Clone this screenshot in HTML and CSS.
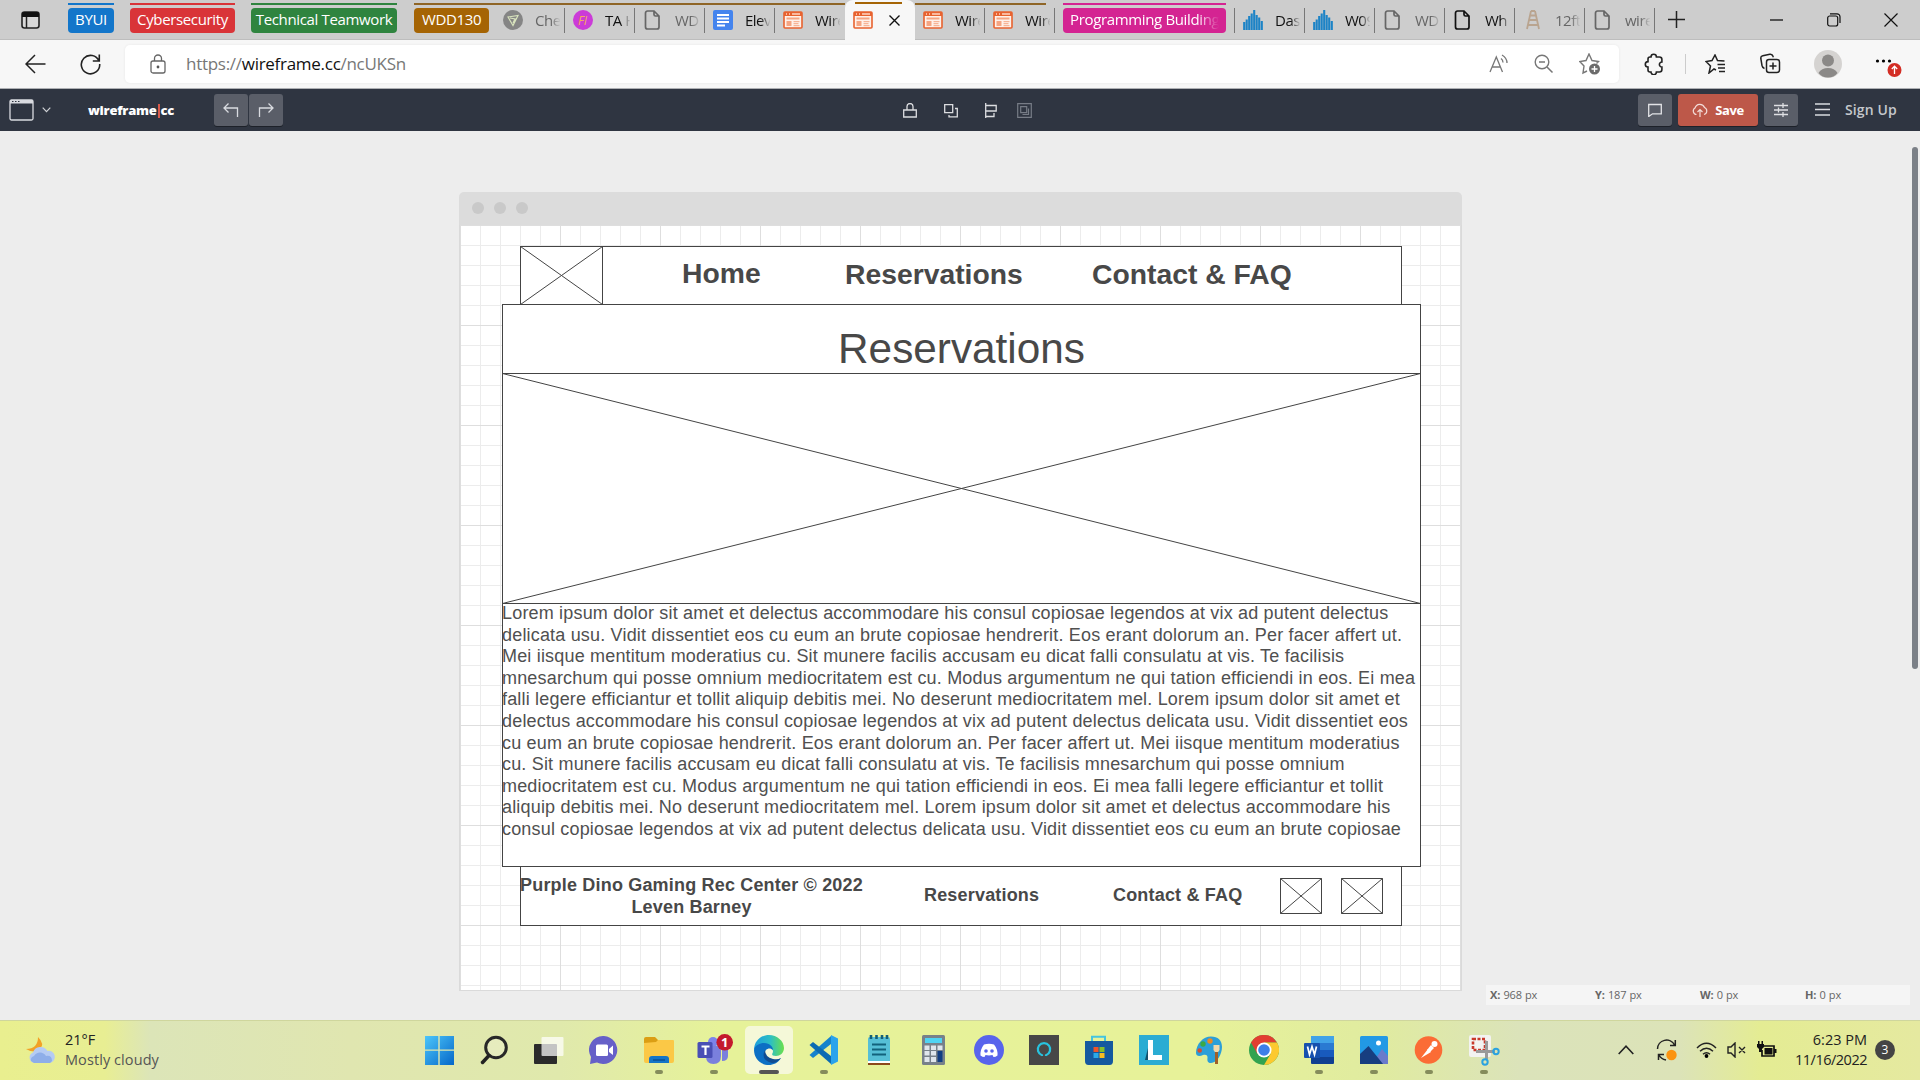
FILE: index.html
```html
<!DOCTYPE html>
<html lang="en">
<head>
<meta charset="utf-8">
<title>wireframe.cc</title>
<link rel="stylesheet" href="styles.css">
</head>
<body>
<svg class="defs" width="0" height="0">
  <symbol id="page" viewBox="0 0 20 20"><path d="M4.500 1h6.500l5 5v11a2 2 0 0 1-2 2H4.500a2 2 0 0 1-2-2V3a2 2 0 0 1 2-2zM11 1v3.500a1.500 1.500 0 0 0 1.500 1.500H16" fill="none" stroke="currentColor" stroke-width="1.700"/></symbol>
  <symbol id="wire" viewBox="0 0 20 20"><rect x="1" y="2" width="18" height="16" rx="1" fill="#fff1ea" stroke="#e8622f" stroke-width="1.600"/><path d="M1 2h18v4H1z" fill="#e8622f"/><path d="M3 4h1M6 4h1M9 4h8" stroke="#ffd5c3" stroke-width="1.300"/><path d="M3.500 8.500h13" stroke="#f5a583" stroke-width="2"/><path d="M3.500 11h5v5h-5z" fill="#f5a583"/><path d="M10.500 11.700h6M10.500 13.700h5M10.500 15.700h6" stroke="#f5a583"/></symbol>
  <symbol id="bars" viewBox="0 0 20 20"><path d="M1.200 20v-8M3.700 20V9.500M6.200 20V6M8.700 20V3.500M11.200 20V0M13.700 20V5M16.200 20V7.500M18.800 20v-9" stroke="#1c83c6" stroke-width="2.100"/></symbol>
</svg>

<header class="tabstrip">
  <svg class="tabmenu" width="20" height="20" viewBox="0 0 20 20"><rect x="1" y="2" width="17" height="16" rx="2.500" fill="#d8d8d8" stroke="#222" stroke-width="1.600"/><path d="M1 3.500Q1 2 3 2h13q2 0 2 2v3H1z" fill="#111"/><path d="M5.500 7v11" stroke="#222" stroke-width="1.500"/></svg>
  <span class="pill blue">BYUI</span>
  <span class="pill red">Cybersecurity</span>
  <span class="pill green">Technical Teamwork</span>
  <span class="pill brown">WDD130</span>
  <div class="tabs grouped">
    <div class="tab dim"><svg width="20" height="20"><circle cx="10" cy="10" r="10" fill="#858585"/><path d="M5 7l10-1.500-5 10zM7 8l5 1-2 4" fill="none" stroke="#d8e3bd" stroke-width="1.200"/></svg><span>Che</span></div>
    <div class="tab"><svg width="20" height="20"><circle cx="10" cy="10" r="10" fill="#cb3bd8"/><text x="5" y="14.500" class="fi">FI</text></svg><span>TA H</span></div>
    <div class="tab dim"><svg width="20" height="20"><use href="#page"/></svg><span>WD</span></div>
    <div class="tab"><svg width="20" height="20"><rect width="20" height="20" rx="2" fill="#4484ee"/><path d="M4 5h12M4 8.500h12M4 12h12M4 15.500h8" stroke="#fff" stroke-width="1.900"/></svg><span>Elev</span></div>
    <div class="tab"><svg width="20" height="20"><use href="#wire"/></svg><span>Wire</span></div>
    <div class="tab active"><svg width="20" height="20"><use href="#wire"/></svg><svg class="x" width="11" height="11" viewBox="0 0 11 11"><path d="M.5.5l10 10M10.500.5l-10 10" stroke="#111" stroke-width="1.400"/></svg></div>
    <div class="tab"><svg width="20" height="20"><use href="#wire"/></svg><span>Wire</span></div>
    <div class="tab"><svg width="20" height="20"><use href="#wire"/></svg><span>Wire</span></div>
  </div>
  <span class="pill pink"><span>Programming Building</span></span>
  <div class="tabs rest">
    <div class="tab"><svg width="20" height="20"><use href="#bars"/></svg><span>Das</span></div>
    <div class="tab"><svg width="20" height="20"><use href="#bars"/></svg><span>W09</span></div>
    <div class="tab dim"><svg width="20" height="20"><use href="#page"/></svg><span>WD</span></div>
    <div class="tab"><svg width="20" height="20"><use href="#page"/></svg><span>Wh</span></div>
    <div class="tab dim"><svg width="20" height="20" viewBox="0 0 20 20"><path d="M8 1L4 19M12 1l4 18M8 1h4M7 5.500h6M6.500 10h7.500M5 15h10" fill="none" stroke="#b9a48f" stroke-width="1.800"/></svg><span>12ft</span></div>
    <div class="tab dim"><svg width="20" height="20"><use href="#page"/></svg><span>wire</span></div>
  </div>
  <svg class="newtab" width="17" height="17"><path d="M8.500 0v17M0 8.500h17" stroke="#222" stroke-width="1.500"/></svg>
  <div class="winctl">
    <svg width="14" height="14"><path d="M0 7h13" stroke="#111" stroke-width="1.300"/></svg>
    <svg width="14" height="14"><rect x=".7" y="3" width="10" height="10" rx="2" fill="none" stroke="#111" stroke-width="1.200"/><path d="M3 .8h7a3 3 0 0 1 3 3V10" fill="none" stroke="#111" stroke-width="1.200"/></svg>
    <svg width="14" height="14"><path d="M.5.5l13 13M13.500.5l-13 13" stroke="#111" stroke-width="1.200"/></svg>
  </div>
</header>

<div class="toolbar">
  <svg class="back" width="21" height="20" viewBox="0 0 21 20"><path d="M20.500 10H1M10 1L1 10l9 9" fill="none" stroke="#222" stroke-width="1.500"/></svg>
  <svg class="reload" width="21" height="22" viewBox="0 0 21 22"><path d="M19 8A9.200 9.200 0 1 0 19.700 11M19.300 1.500V8h-6.500" fill="none" stroke="#222" stroke-width="1.600"/></svg>
  <div class="urlbar">
    <svg width="16" height="20" viewBox="0 0 16 20"><rect x="1" y="7" width="14" height="12" rx="2" fill="none" stroke="#666" stroke-width="1.300"/><path d="M4.500 7V4.500a3.500 3.500 0 0 1 7 0V7" fill="none" stroke="#666" stroke-width="1.300"/><circle cx="8" cy="13" r="1.400" fill="#555"/></svg>
    <span class="url">https://<b>wireframe.cc</b>/ncUKSn</span>
    <div class="urlicons">
      <svg width="20" height="20" viewBox="0 0 20 20"><path d="M1 18L7.300 3 13.500 18M3.300 13h8M12 4.500q2 1.500 2 4M13 1q5 3 5 8" fill="none" stroke="#777" stroke-width="1.300"/></svg>
      <svg width="20" height="20" viewBox="0 0 20 20"><circle cx="8" cy="8" r="6.800" fill="none" stroke="#777" stroke-width="1.400"/><path d="M13 13l5.500 5.500M5 8h6" stroke="#777" stroke-width="1.500"/></svg>
      <svg width="22" height="22" viewBox="0 0 22 22"><path d="M8 18l-4 2 1-7L.8 8.500l6.200-1L10 1l3 6.500 6.500 1-2 2" fill="none" stroke="#777" stroke-width="1.400"/><circle cx="15.500" cy="16" r="5.500" fill="#6b6b6b"/><path d="M15.500 13v6M12.500 16h6" stroke="#fff" stroke-width="1.300"/></svg>
    </div>
  </div>
  <svg class="puzzle" width="21" height="22" viewBox="0 0 21 22"><path d="M7 4a2.700 2.700 0 0 1 5.400 0h3a2.500 2.500 0 0 1 2.500 2.500V9a2.500 2.500 0 1 0 0 5v2.500a2.500 2.500 0 0 1-2.500 2.500h-3a2.700 2.700 0 0 1-5.400 0H6a2 2 0 0 1-2-2v-3a2.700 2.700 0 0 1 0-5.400V6a2 2 0 0 1 2-2z" fill="none" stroke="#222" stroke-width="1.600"/></svg>
  <i class="vr"></i>
  <svg class="fav" width="21" height="20" viewBox="0 0 21 20"><path d="M11 16l-2-1-5 4 1.500-7L1 7.500l6-1L10 1l2.500 5.500 7 .5M12.500 10.500H20M13 14h7M14 17.500h6" fill="none" stroke="#222" stroke-width="1.500"/></svg>
  <svg class="coll" width="21" height="21" viewBox="0 0 21 21"><rect x="6.500" y="6.500" width="13" height="13" rx="2.500" fill="none" stroke="#222" stroke-width="1.500"/><path d="M13 9.500v7M9.500 13h7M4.500 15.500q-2-.5-2.500-3L.8 5.500q-.3-2.300 2-2.800l7-1.500q2.500-.4 3.200 2l.4 1" fill="none" stroke="#222" stroke-width="1.500"/></svg>
  <svg class="avatar" width="28" height="28"><circle cx="14" cy="14" r="14" fill="#d5d3d1"/><circle cx="14" cy="10.500" r="6" fill="#8b8987"/><path d="M4.500 23q3-5 9.500-5t9.500 5Q20 27.500 14 27.500T4.500 23z" fill="#8b8987"/></svg>
  <svg class="more" width="27" height="22" viewBox="0 0 27 22"><circle cx="2.500" cy="3" r="1.600"/><circle cx="8.500" cy="3" r="1.600"/><circle cx="14.500" cy="3" r="1.600"/><circle cx="19.500" cy="12" r="7" fill="#d32d24"/><path d="M19.500 16V8.500M16.800 11l2.700-2.800 2.700 2.800" fill="none" stroke="#fff" stroke-width="1.300"/></svg>
</div>

<nav class="appbar">
  <svg class="appwin" width="26" height="22"><rect x="1" y="1" width="23" height="20" rx="1.500" fill="none" stroke="#d9dbe0" stroke-width="1.300"/><path d="M1 1h23v3.500H1z" fill="#d9dbe0"/><path d="M3 2.500h1.500M6 2.500h1.500M9 2.500h1.500" stroke="#2f3541" stroke-width="1.200"/></svg>
  <svg class="chev" width="9" height="6"><path d="M.7.7l3.800 4 3.800-4" fill="none" stroke="#d0d2d6" stroke-width="1.200"/></svg>
  <span class="brand">wireframe<i></i>cc</span>
  <div class="undo">
    <span><svg width="16" height="14" viewBox="0 0 16 14"><path d="M14.500 14V5H1M5.500.5L1 5l4.500 4.500" fill="none" stroke="#d9dbe0" stroke-width="1.300"/></svg></span>
    <span><svg width="16" height="14" viewBox="0 0 16 14"><path d="M1.500 14V5H15M10.500.5L15 5l-4.500 4.500" fill="none" stroke="#d9dbe0" stroke-width="1.300"/></svg></span>
  </div>
  <div class="tools">
    <svg width="14" height="15"><path d="M.7 7h12.600v7H.7zM4 7V3.500a3 3 0 0 1 6 0V7" fill="none" stroke="#dcdde0" stroke-width="1.300"/></svg>
    <svg width="14" height="15"><path d="M.7 1.700h8v8h-8zM11 5.500h2.300v8.300H5V12" fill="none" stroke="#dcdde0" stroke-width="1.300"/></svg>
    <svg width="12" height="15"><path d="M.7 0v15M.7 2.500h10.500v5.500H.7M9 10v3.500H.7" fill="none" stroke="#dcdde0" stroke-width="1.300"/></svg>
    <svg width="15" height="15"><path d="M.7.7h13.600v13.600H.7zM3.700 3.700h6v6h-6zM11.500 5.500v6h-6" fill="none" stroke="#777c86" stroke-width="1.200"/></svg>
  </div>
  <span class="btn"><svg width="14" height="14"><path d="M.7 1.500h12.600v9.300H4.500L.7 13.500z" fill="none" stroke="#e2e3e6" stroke-width="1.300"/></svg></span>
  <span class="btn save"><svg width="16" height="14" viewBox="0 0 16 14"><path d="M4.500 11.500A3.500 3.500 0 0 1 3 5a5 5 0 0 1 9.500-.5A3.700 3.700 0 0 1 12 11.500M8 14V6.500M5.500 9L8 6.500 10.500 9" fill="none" stroke="#f3dcd8" stroke-width="1.200"/></svg>Save</span>
  <span class="btn"><svg width="14" height="16" viewBox="0 0 14 16"><path d="M0 3.500h14M0 8h14M0 12.500h14M9 1v5M4.500 5.500v5M9 10v5" stroke="#dfe0e3" stroke-width="1.300"/></svg></span>
  <svg class="burger" width="15" height="13"><path d="M0 1h15M0 6.500h15M0 12h15" stroke="#d9dbe0" stroke-width="1.400"/></svg>
  <span class="signup">Sign Up</span>
</nav>

<main class="workspace">
  <section class="mock">
    <div class="mockbar"><i></i><i></i><i></i></div>
    <div class="grid">
      <div class="wf-nav">
        <svg class="pic logo" viewBox="0 0 83 59" preserveAspectRatio="none"><path d="M.5.5h82v58H.5zL82.500 58.500M82.500.5L.5 58.500"/></svg>
        <b class="n1">Home</b><b class="n2">Reservations</b><b class="n3">Contact &amp; FAQ</b>
      </div>
      <div class="wf-main">
        <h1>Reservations</h1>
        <svg class="pic hero" viewBox="0 0 919 231"><path d="M.5.5h918v230H.5zL918.500 230.500M918.500.5L.5 230.500"/></svg>
        <p>Lorem ipsum dolor sit amet et delectus accommodare his consul copiosae legendos at vix ad putent delectus<br>delicata usu. Vidit dissentiet eos cu eum an brute copiosae hendrerit. Eos erant dolorum an. Per facer affert ut.<br>Mei iisque mentitum moderatius cu. Sit munere facilis accusam eu dicat falli consulatu at vis. Te facilisis<br>mnesarchum qui posse omnium mediocritatem est cu. Modus argumentum ne qui tation efficiendi in eos. Ei mea<br>falli legere efficiantur et tollit aliquip debitis mei. No deserunt mediocritatem mel. Lorem ipsum dolor sit amet et<br>delectus accommodare his consul copiosae legendos at vix ad putent delectus delicata usu. Vidit dissentiet eos<br>cu eum an brute copiosae hendrerit. Eos erant dolorum an. Per facer affert ut. Mei iisque mentitum moderatius<br>cu. Sit munere facilis accusam eu dicat falli consulatu at vis. Te facilisis mnesarchum qui posse omnium<br>mediocritatem est cu. Modus argumentum ne qui tation efficiendi in eos. Ei mea falli legere efficiantur et tollit<br>aliquip debitis mei. No deserunt mediocritatem mel. Lorem ipsum dolor sit amet et delectus accommodare his<br>consul copiosae legendos at vix ad putent delectus delicata usu. Vidit dissentiet eos cu eum an brute copiosae</p>
      </div>
      <div class="wf-foot">
        <b class="f1">Purple Dino Gaming Rec Center © 2022<br>Leven Barney</b>
        <b class="f2">Reservations</b><b class="f3">Contact &amp; FAQ</b>
        <svg class="pic social" viewBox="0 0 42 36"><path d="M.5.5h41v35H.5zL41.500 35.500M41.500.5L.5 35.500"/></svg>
        <svg class="pic social" viewBox="0 0 42 36"><path d="M.5.5h41v35H.5zL41.500 35.500M41.500.5L.5 35.500"/></svg>
      </div>
    </div>
  </section>
  <i class="scroll"></i>
  <div class="coords"><span><b>X:</b> 968 px</span><span><b>Y:</b> 187 px</span><span><b>W:</b> 0 px</span><span><b>H:</b> 0 px</span></div>
</main>

<footer class="taskbar">
  <div class="weather">
    <svg width="30" height="28" viewBox="0 0 30 28"><path d="M12 1q7 7 2 12T0 13q12 0 12-12z" fill="#f2a127"/><path d="M8 27a5.500 5.500 0 0 1-1-10.500 8 8 0 0 1 14.500-1.500A6 6 0 0 1 24 27z" fill="#b5cbf3"/><path d="M5 25a4 4 0 0 1 3-5 7 7 0 0 1 12 0q6-1 6 5l-2 2H8z" fill="#8eaee9"/></svg>
    <div>21°F<br><span>Mostly cloudy</span></div>
  </div>
  <div class="apps">
    <span><svg width="30" height="30" viewBox="0 0 30 30"><defs><linearGradient id="win" x2="1" y2="1"><stop stop-color="#4cc6fa"/><stop offset="1" stop-color="#0567c9"/></linearGradient></defs><path d="M1 1h13.300v13.500H1zM15.700 1H30v13.500H15.700zM1 15.800h13.300V30H1zM15.700 15.800H30V30H15.700z" fill="url(#win)"/></svg></span>
    <span><svg width="30" height="30" viewBox="0 0 30 30"><circle cx="17" cy="12.500" r="10.300" fill="#ffffff33" stroke="#282828" stroke-width="3"/><path d="M10 20.500L3.500 27.500" stroke="#222" stroke-width="3.500" stroke-linecap="round"/></svg></span>
    <span><svg width="30" height="30" viewBox="0 0 30 30"><rect x="0" y="9" width="23" height="20" rx="1" fill="#2b2b2b"/><rect x="7.500" y="2" width="22" height="19" rx="1" fill="#fff" fill-opacity=".72"/></svg></span>
    <span><svg width="30" height="30" viewBox="0 0 30 30"><path d="M15 1a14 14 0 1 1-7 26.500L1 29l1-7A14 14 0 0 1 15 1z" fill="#6660c8"/><rect x="7" y="9.500" width="12" height="11.500" rx="1.500" fill="#fff"/><path d="M20 14l4-3.500v9.500L20 17z" fill="#fff"/></svg></span>
    <span class="run"><svg width="30" height="30" viewBox="0 0 30 30"><path d="M0 4q0-2 2-2h9l3 3v6H0z" fill="#db9e14"/><path d="M0 8l12-1 2-2h15q1 0 1 1v20q0 2-2 2H2q-2 0-2-2z" fill="#fbc846"/><path d="M5 28v-4q0-3 3-3h14q3 0 3 3v4z" fill="#1575c7"/><path d="M9 25h12" stroke="#0b4f94" stroke-width="1.500"/></svg></span>
    <span class="run"><svg width="38" height="32" viewBox="0 0 38 32"><circle cx="18" cy="8" r="5" fill="#7b83eb"/><circle cx="27" cy="10" r="4" fill="#5059c9"/><path d="M11 12h15v10q0 8-7.500 8T11 22zM27 13h6v9q0 5-6 5z" fill="#7a80dd"/><rect x="2.500" y="8" width="15" height="16" rx="1.500" fill="#494fb5"/><path d="M6.500 12.500h8M10.500 12.500V21" stroke="#fff" stroke-width="2.200"/><circle cx="29.700" cy="8.300" r="8.300" fill="#c4192d"/><text x="26" y="13" class="one">1</text></svg></span>
    <span class="run on"><svg width="32" height="32" viewBox="0 0 32 32"><defs><linearGradient id="eg" x2="1"><stop stop-color="#1c9ede"/><stop offset=".55" stop-color="#2dbfc3"/><stop offset="1" stop-color="#6be04a"/></linearGradient></defs><path d="M1 16C1 7 8 1 16 1s15 6 15 13c0 5-4 8-8 8-5 0-4-2-3-4 0-5-4-6-7-6-6 0-11 3-12 4z" fill="url(#eg)"/><path d="M1 16c1-5 6-7 10-7 6 0 9 4 9 7-4-4-10 0-8 6 2 5 9 7 16 2-3 5-8 7-12 7C7 31 1 24 1 16z" fill="#0c6fc4"/><path d="M12 16q-5 10 7 13 5 0 9-5-3 2-8 1-8-2-8-9z" fill="#104c92"/></svg></span>
    <span class="run"><svg width="30" height="30" viewBox="0 0 30 30"><path d="M22 1v8L4 23l-3.500-3z" fill="#1583cc"/><path d="M22 29v-8L4 7 .5 10z" fill="#0b6bb3"/><path d="M22 0l7 3.500v23L22 30z" fill="#2aa3ec"/></svg></span>
    <span><svg width="22" height="30" viewBox="0 0 22 30"><rect y="2" width="22" height="27" rx="2" fill="#56bfd6"/><path d="M0 26h22v2H0z" fill="#fff"/><path d="M0 29h22" stroke="#8c4a1a" stroke-width="2"/><path d="M3 0v4M8.500 0v4M14 0v4M19 0v4" stroke="#125f78" stroke-width="2.600"/><path d="M4 9.500h14M4 14.500h14M4 19.500h14" stroke="#12627c" stroke-width="2"/></svg></span>
    <span><svg width="23" height="30" viewBox="0 0 23 30"><rect width="23" height="30" rx="1.500" fill="#77818a"/><rect x="3" y="3" width="17" height="5" fill="#4fd4f3"/><path d="M2.500 10.500h5v4.500h-5zM9 10.500h5v4.500H9zM15.500 10.500h5v4.500h-5zM2.500 16h5v4.500h-5zM9 16h5v4.500H9zM2.500 22h5v5h-5zM9 22h5v5H9z" fill="#dfe6ec"/><path d="M15.500 16h5v11h-5z" fill="#123e82"/></svg></span>
    <span><svg width="30" height="30" viewBox="0 0 30 30"><circle cx="15" cy="15" r="15" fill="#5864ec"/><path d="M10 9.500q5-1.500 10 0 4 5 3.500 11-2 1.500-4 1.500l-1-2q-3.500.8-7 0l-1 2q-2 0-4-1.500Q6 14.500 10 9.500z" fill="#fff"/><circle cx="12" cy="16" r="1.800" fill="#5864ec"/><circle cx="18" cy="16" r="1.800" fill="#5864ec"/></svg></span>
    <span><svg width="30" height="30" viewBox="0 0 30 30"><path d="M0 0h30v30H0z" fill="#474747"/><path d="M13 21v-.8a6.200 6.200 0 1 1 4 0v.8" fill="none" stroke="#28c3df" stroke-width="2.200"/></svg></span>
    <span><svg width="30" height="30" viewBox="0 0 30 30"><path d="M8 7V1.800h13V7" fill="none" stroke="#45c5df" stroke-width="2"/><path d="M1 6h28v20q0 4-3.500 4h-21Q1 30 1 26z" fill="#15599f"/><path d="M9.500 12h5v5h-5z" fill="#ee5428"/><path d="M15.500 12h5v5h-5z" fill="#85bf2c"/><path d="M9.500 18h5v5h-5z" fill="#2ba9e8"/><path d="M15.500 18h5v5h-5z" fill="#f9bd22"/></svg></span>
    <span><svg width="30" height="30" viewBox="0 0 30 30"><path d="M0 0h30v30H0z" fill="#2bacd3"/><path d="M11 5L6 25h9z" fill="#14506b"/><path d="M9 5h5v15h9v5H9z" fill="#fff"/></svg></span>
    <span><svg width="30" height="30" viewBox="0 0 30 30"><path d="M17 1.500c7 0 11 4 11 10.500 0 7-5 16-11 16-3 0-4-2-3.500-5 .5-3-2-4-4.500-3-3 1.500-7 1.500-7-2C2 9 9 1.500 17 1.500z" fill="#2c9fd8"/><circle cx="9" cy="9" r="2.700" fill="#3aa946"/><circle cx="16" cy="6" r="2.700" fill="#ed8a23"/><circle cx="5.700" cy="15.500" r="2.300" fill="#d64d30"/><path d="M19.500 10h6v5l-2 3h-2l-2-3z" fill="#f3d8a8"/><path d="M22.500 17v12" stroke="#a15f28" stroke-width="3"/></svg></span>
    <span><svg width="30" height="30" viewBox="0 0 30 30"><circle cx="15" cy="15" r="15" fill="#32a350"/><path d="M2 7.500A15 15 0 0 1 28 7.500H15L8.500 19z" fill="#e23e31"/><path d="M15 7.500h13A15 15 0 0 1 15 30l6.500-11z" fill="#fcc92f"/><circle cx="15" cy="15" r="7.500" fill="#fff"/><circle cx="15" cy="15" r="5.800" fill="#3d7fe8"/></svg></span>
    <span class="run"><svg width="30" height="30" viewBox="0 0 30 30"><path d="M7 1h23v7H7z" fill="#41a3e8"/><path d="M7 8h23v7H7z" fill="#2a7ad2"/><path d="M7 15h23v7H7z" fill="#185abd"/><path d="M7 22h23v6q0 1-1 1H8q-1 0-1-1z" fill="#103f91"/><rect y="8" width="16" height="15" rx="1" fill="#1750ae"/><path d="M3.500 11.500l2 8 2.500-8 2.500 8 2-8" fill="none" stroke="#fff" stroke-width="1.700"/></svg></span>
    <span class="run"><svg width="30" height="30" viewBox="0 0 30 30"><rect x="1" y="1" width="28" height="28" rx="1.500" fill="#2299e5"/><path d="M13 29l10-15 6 7v8z" fill="#6a7acb"/><path d="M1 19L9.500 11 24 29H1z" fill="#173e80"/><circle cx="19.500" cy="8" r="2.500" fill="#fff"/></svg></span>
    <span class="run"><svg width="30" height="30" viewBox="0 0 30 30"><circle cx="14.500" cy="15" r="13.800" fill="#fb6c35"/><path d="M7 23l7-9 3 3z" fill="#fff"/><path d="M13 15l4-5 3 3-4 4z" fill="#fff"/><circle cx="20.500" cy="9" r="3" fill="#fff"/></svg></span>
    <span class="run"><svg width="32" height="32" viewBox="0 0 32 32"><rect x="1" y="1" width="22" height="22" rx="2" fill="#f3f3f1"/><rect x="5" y="5" width="12" height="11" fill="none" stroke="#c9392b" stroke-width="2.600" stroke-dasharray="3 1.500"/><path d="M18.500 7v18M8 17.500h19" stroke="#9a9a9a" stroke-width="3"/><circle cx="28" cy="17.500" r="2.700" fill="none" stroke="#2aa2e0" stroke-width="2"/><circle cx="17" cy="28" r="2.700" fill="none" stroke="#2aa2e0" stroke-width="2"/></svg></span>
  </div>
  <div class="tray">
    <svg class="up" width="16" height="10"><path d="M.7 9L8 1.200 15.300 9" fill="none" stroke="#222" stroke-width="1.600"/></svg>
    <svg class="sync" width="22" height="22" viewBox="0 0 22 22"><path d="M1.500 10A9 9 0 0 1 18.500 6M19.300 1v5.500H14M2.500 21v-5.500H8M3 16q2 4 7 5" fill="none" stroke="#222" stroke-width="1.500"/><circle cx="15.500" cy="16" r="5.200" fill="#fb9311"/></svg>
    <svg class="wifi" width="21" height="16" viewBox="0 0 21 16"><path d="M1 6Q10.500-3.500 20 6M4 9.200q6.500-6 13 0M7 12.200q3.500-3 7 0" fill="none" stroke="#222" stroke-width="1.500"/><circle cx="10.500" cy="14" r="1.900"/></svg>
    <svg class="vol" width="20" height="16" viewBox="0 0 20 16"><path d="M1 5h3l4-4v14l-4-4H1zM12 5l6 6M18 5l-6 6" fill="none" stroke="#222" stroke-width="1.400"/></svg>
    <svg class="bat" width="20" height="18" viewBox="0 0 20 18"><path d="M7 5h10v10H5V9" fill="none" stroke="#111" stroke-width="1.700"/><path d="M7.500 7h8v6.500h-8zM17 8h2.500v4H17zM0 3h7v3L5 8v3H2V8L0 6zM1 0h1.500v3H1zM4.500 0H6v3H4.500z" fill="#111"/></svg>
    <div class="clock"><span>6:23 PM</span><br>11/16/2022</div>
    <span class="count">3</span>
  </div>
</footer>
</body>
</html>
```
FILE: styles.css
```css
* { box-sizing: border-box; }
body { margin: 0; width: 1920px; height: 1080px; overflow: hidden; display: flex; flex-direction: column; background: #ededed; font-family: "Open Sans", "Noto Sans", sans-serif; font-size: 15px; }
svg { flex: none; display: block; }
.defs { position: absolute; }

.tabstrip { height: 40px; display: flex; background: #cdcdcd; flex: none; border-bottom: 1px solid #bdbdbd; }
.tabmenu { margin: 10px 26px 0 21px; }
.pill { position: relative; height: 25px; margin-top: 8px; border-radius: 4px; color: #fff; line-height: 23px; text-align: center; letter-spacing: -.35px; white-space: nowrap; flex: none; }
.pill::before { content: ""; position: absolute; left: 0; right: 0; top: -5px; height: 2px; background: inherit; }
.blue { width: 46px; background: #1376ca; margin-left: 1px; }
.red { width: 105px; background: #d93438; margin-left: 16px; }
.green { width: 146px; background: #2f843f; margin-left: 16px; }
.brown { width: 75px; background: #a56404; margin-left: 17px; }
.pink { width: 163px; background: #d42492; margin-left: 8px; text-align: left; padding-left: 7px; }
.pink span { display: block; width: 149px; overflow: hidden; -webkit-mask: linear-gradient(90deg, #000 85%, transparent); mask: linear-gradient(90deg, #000 85%, transparent); }
.tabs { display: flex; margin-left: 6px; flex: none; }
.tab { position: relative; width: 70px; padding: 0 2px 0 8px; height: 40px; display: flex; align-items: center; gap: 12px; color: #111; }
.tab::after { content: ""; position: absolute; right: 0; top: 8px; width: 1px; height: 25px; background: #777; }
.tab span { width: 26px; overflow: hidden; white-space: nowrap; line-height: 24px; letter-spacing: -.5px; -webkit-mask: linear-gradient(90deg, #000 60%, transparent 98%); mask: linear-gradient(90deg, #000 60%, transparent 98%); }
.tab.dim { color: #666; }
.grouped .tab::before { content: ""; position: absolute; left: 0; right: 0; top: 3px; height: 2px; background: #8f6526; }
.grouped .tab:first-child::before { left: -81px; }
.grouped .tab:last-child::before { right: 9px; }
.active { background: #f7f7f7; border-radius: 8px 8px 0 0; gap: 16px; }
.grouped .active::before { left: 10px; right: 13px; top: 2px; background: #a56404; }
.active::after, .tab:has(+ .active)::after { display: none; }
.fi { font: italic 12px "Open Sans", sans-serif; fill: #f7a95c; }
.rest { margin-left: 8px; border-left: 1px solid #777; height: 25px; margin-top: 8px; }
.rest .tab { margin-top: -8px; }
.newtab { margin: 11px 0 0 13px; }
.winctl { display: flex; gap: 43px; margin: 13px 0 0 85px; }

.toolbar { height: 49px; flex: none; display: flex; align-items: center; background: #f7f7f7; border-bottom: 1px solid #aeb0b4; padding-bottom: 1px; }
.back { margin-left: 25px; }
.reload { margin-left: 34px; }
.urlbar { margin-left: 24px; width: 1494px; height: 38px; background: #fff; border-radius: 5px; box-shadow: 0 0 3px #0001; display: flex; align-items: center; padding-left: 25px; }
.url { margin-left: 20px; font-size: 17px; letter-spacing: -.28px; color: #777; }
.url b { font-weight: 400; color: #111; }
.urlicons { display: flex; align-items: center; gap: 25px; margin: 0 18px 0 auto; }
.puzzle { margin-left: 25px; }
.vr { width: 1px; height: 20px; background: #ccc; margin-left: 20px; }
.fav { margin-left: 19px; }
.coll { margin-left: 34px; }
.avatar { margin-left: 33px; }
.more { margin: 10px 0 0 33px; }

.appbar { height: 42px; flex: none; display: flex; align-items: center; background: #2f3541; color: #c5c8cc; padding-bottom: 1px; }
.appwin { margin-left: 9px; }
.chev { margin-left: 7px; }
.brand { width: 88px; margin-left: 37px; font-size: 13px; font-weight: 800; letter-spacing: -.25px; color: #fff; white-space: nowrap; }
.brand i { display: inline-block; width: 2px; height: 14px; margin: 0 1px; background: #d85a4b; vertical-align: -3px; }
.undo { display: flex; gap: 1px; margin-left: 38px; }
.undo span, .btn { width: 34px; height: 32px; background: #5a5e68; border-radius: 3px; display: flex; align-items: center; justify-content: center; box-shadow: 0 1px #1d2129; }
.tools { display: flex; align-items: center; gap: 27px; margin-left: 620px; width: 129px; padding-top: 1px; }
.tools svg:last-child { margin-left: -7px; }
.tools + .btn { margin-left: 606px; }
.btn.save { width: 80px; gap: 7px; background: #bd5849; color: #fff; font-size: 13px; font-weight: 700; letter-spacing: -.4px; margin: 0 6px; }
.burger { margin-left: 17px; }
.signup { margin-left: 15px; font-size: 14px; font-weight: 600; letter-spacing: .1px; white-space: nowrap; }

.workspace { flex: 1; display: grid; position: relative; }
.mock { width: 1003px; height: 799px; margin: 61px 0 0 459px; }
.mockbar { height: 33px; background: #dcdcdc; border-radius: 5px 5px 0 0; display: flex; align-items: center; gap: 10px; padding: 0 0 1px 13px; }
.mockbar i { width: 12px; height: 12px; border-radius: 50%; background: #c9c9c9; }
.grid { height: 766px; border: 1px solid #dadada; border-top: 0; padding-top: 21px; background-color: #fff; background-image: linear-gradient(90deg, #dedede 1px, transparent 1px), linear-gradient(#dedede 1px, transparent 1px), linear-gradient(90deg, #ececec 1px, transparent 1px), linear-gradient(#ececec 1px, transparent 1px); background-size: 100px 100px, 100px 100px, 20px 20px, 20px 20px; font-family: "Liberation Sans", Arial, sans-serif; color: #484848; }
.pic { fill: none; stroke: #444; stroke-width: 1; flex: none; }
.wf-nav { margin-left: 60px; width: 882px; height: 58px; border: 1px solid #444; border-bottom: 0; background: #fff; display: flex; align-items: center; font-size: 28.300px; line-height: 32px; }
.logo { width: 83px; height: 59px; margin: -1px 0 0 -1px; align-self: flex-start; }
.n1 { margin: -5px 0 0 79px; width: 80px; }
.n2 { margin: -3px 0 0 83px; width: 179px; }
.n3 { margin: -3px 0 0 68px; white-space: nowrap; }
.wf-main { margin-left: 42px; width: 919px; height: 563px; border: 1px solid #444; background: #fff; }
.wf-main h1 { margin: 0; height: 68px; padding-top: 19px; font-size: 42.300px; font-weight: 400; line-height: 50px; text-align: center; }
.hero { width: 919px; height: 231px; margin-left: -1px; }
.wf-main p { margin: -1px 0 0 -1px; font-size: 18px; line-height: 21.600px; white-space: nowrap; letter-spacing: .18px; color: #505050; }
.wf-foot { margin-left: 60px; width: 882px; height: 59px; border: 1px solid #444; border-top: 0; background: #fff; display: flex; align-items: center; font-size: 18px; line-height: 22px; white-space: nowrap; letter-spacing: .18px; }
.f1 { width: 343px; margin-left: -1px; text-align: center; }
.f2 { width: 116px; margin: -2px 0 0 61px; }
.f3 { width: 132px; margin: -2px 0 0 73px; }
.social { width: 42px; height: 36px; margin-left: 35px; }
.social + .social { margin-left: 19px; }
.scroll { position: absolute; right: 2px; top: 16px; width: 6px; height: 522px; border-radius: 3px; background: #7b8087; }
.coords { position: absolute; right: 10px; bottom: 15px; width: 424px; height: 20px; padding: 0 0 1px 4px; background: #f5f5f5; display: flex; align-items: center; font-size: 11px; color: #666; letter-spacing: -.15px; word-spacing: .5px; }
.coords span { width: 106px; }

.taskbar { height: 60px; flex: none; display: flex; align-items: center; border-top: 1px solid #cfd69d; padding-bottom: 1px; background: linear-gradient(90deg, #e9ef8f 0, #e8ee93 105px, #dce5b8 150px, #e0e6b0 350px, #e0e9ac 560px, #e6f299 720px, #e7f299 1200px, #e0eba0 1380px, #dbe3ba 1520px, #dce3b8 1680px, #e4ec93 1760px, #e5e9a0 1920px); color: #222; }
.weather { display: flex; align-items: center; gap: 9px; margin-left: 26px; width: 385px; font-size: 14.500px; line-height: 20px; }
.weather span { color: #555; letter-spacing: .08px; }
.apps { display: flex; flex: none; }
.apps span { width: 55px; height: 58px; display: flex; align-items: center; justify-content: center; position: relative; }
.apps .run::after { content: ""; position: absolute; bottom: 5px; left: 24px; width: 8px; height: 4px; border-radius: 2px; background: #858c5b; }
.apps .on::before { content: ""; position: absolute; left: 4px; top: 5px; width: 48px; height: 48px; border-radius: 5px; background: #f5f8d8; }
.apps .on svg { position: relative; }
.apps .on::after { left: 18px; width: 20px; background: #555; }
.one { font: 700 13px "Open Sans", sans-serif; fill: #fff; }
.tray { display: flex; align-items: center; margin-left: 107px; padding-bottom: 1px; }
.sync { margin-left: 22px; }
.wifi { margin-left: 18px; }
.vol { margin-left: 10px; }
.bat { margin-left: 10px; }
.clock { width: 90px; text-align: right; font-size: 14.500px; line-height: 20px; letter-spacing: -.5px; }
.clock span { letter-spacing: 0; }
.count { width: 20px; height: 20px; border-radius: 50%; margin-left: 8px; background: #444; color: #fff; font-size: 12px; line-height: 19px; text-align: center; }
```
